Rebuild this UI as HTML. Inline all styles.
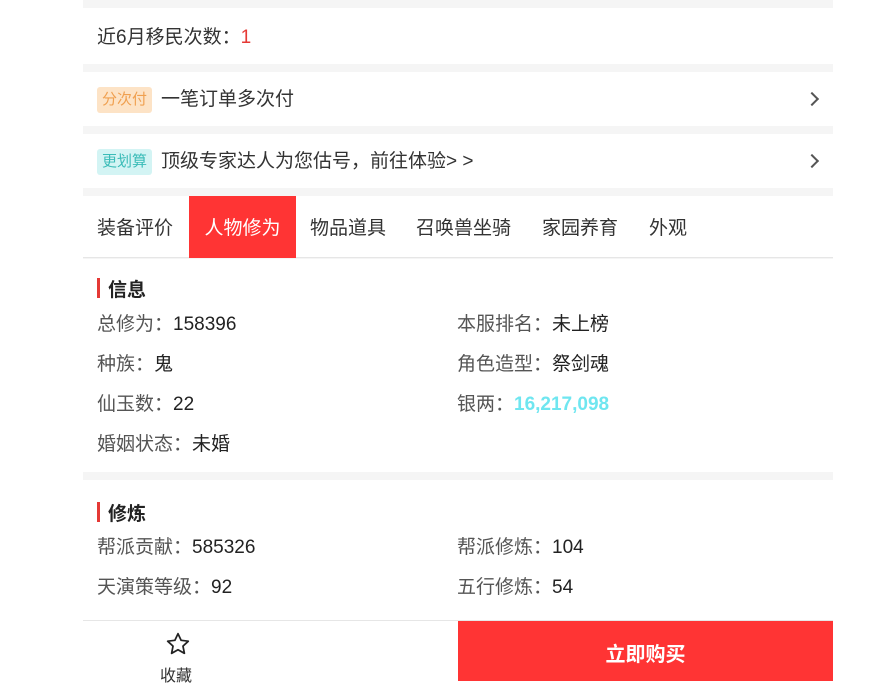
<!DOCTYPE html><html><head><meta charset="utf-8"><style>
*{margin:0;padding:0;box-sizing:border-box}
body{width:890px;height:680px;overflow:hidden;background:#fff;font-family:"Liberation Sans","Noto Sans CJK SC",sans-serif;color:#333;position:relative}
.wrap{position:absolute;left:83px;top:0;width:750px;height:680px;background:#f5f5f5}
.card{position:absolute;left:0;width:750px;background:#fff}
.t{position:absolute;font-size:19px;line-height:24px;white-space:nowrap}
.tag{display:inline-block;font-size:15px;line-height:26px;padding:0 5px;border-radius:3px;margin-right:9px;vertical-align:middle}
.arr{position:absolute;right:16px;width:10px;height:10px;border-right:2px solid #555;border-top:2px solid #555;transform:rotate(45deg)}
.tab{position:absolute;top:0;height:62px;line-height:66px;font-size:19px}
.h{position:absolute;left:14px;font-size:19px;font-weight:bold;color:#222;padding-left:11px}
.h:before{content:"";position:absolute;left:0;top:3px;width:3px;height:20px;background:#e53935}
.k{color:#555}.v{color:#222}
</style></head><body><div class="wrap">
<div class="card" style="top:8px;height:56px"><div class="t" style="left:14px;top:18px">近6月移民次数：<span style="color:#e53935">1</span></div></div>
<div class="card" style="top:72px;height:54px"><div class="t" style="left:14px;top:15px"><span class="tag" style="background:#fde3c6;color:#f0a050">分次付</span>一笔订单多次付</div><div class="arr" style="top:22px"></div></div>
<div class="card" style="top:134px;height:54px"><div class="t" style="left:14px;top:15px"><span class="tag" style="background:#d3f4f4;color:#3bbcb8">更划算</span>顶级专家达人为您估号，前往体验&gt; &gt;</div><div class="arr" style="top:22px"></div></div>
<div class="card" style="top:196px;height:62px;border-bottom:1px solid #e6e6e6">
<div class="tab" style="left:14px">装备评价</div>
<div class="tab" style="left:106px;width:107px;background:#ff3434;color:#fff;text-align:center">人物修为</div>
<div class="tab" style="left:227px">物品道具</div>
<div class="tab" style="left:333px">召唤兽坐骑</div>
<div class="tab" style="left:459px">家园养育</div>
<div class="tab" style="left:566px">外观</div>
</div>
<div class="card" style="top:259px;height:213px">
<div class="h" style="top:16px">信息</div>
<div class="t" style="left:14px;top:54px"><span class="k">总修为：</span><span class="v">158396</span></div>
<div class="t" style="left:374px;top:54px"><span class="k">本服排名：</span><span class="v">未上榜</span></div>
<div class="t" style="left:14px;top:94px"><span class="k">种族：</span><span class="v">鬼</span></div>
<div class="t" style="left:374px;top:94px"><span class="k">角色造型：</span><span class="v">祭剑魂</span></div>
<div class="t" style="left:14px;top:134px"><span class="k">仙玉数：</span><span class="v">22</span></div>
<div class="t" style="left:374px;top:134px"><span class="k">银两：</span><span style="color:#6fe6f0;font-weight:bold">16,217,098</span></div>
<div class="t" style="left:14px;top:174px"><span class="k">婚姻状态：</span><span class="v">未婚</span></div>
</div>
<div class="card" style="top:480px;height:200px">
<div class="h" style="top:19px">修炼</div>
<div class="t" style="left:14px;top:56px"><span class="k">帮派贡献：</span><span class="v">585326</span></div>
<div class="t" style="left:374px;top:56px"><span class="k">帮派修炼：</span><span class="v">104</span></div>
<div class="t" style="left:14px;top:96px"><span class="k">天演策等级：</span><span class="v">92</span></div>
<div class="t" style="left:374px;top:96px"><span class="k">五行修炼：</span><span class="v">54</span></div>
</div>
<div class="card" style="top:620px;height:60px;border-top:1px solid #e6e6e6">
<svg style="position:absolute;left:82px;top:10px" width="26" height="26" viewBox="0 0 24 24"><path d="M12 2.5l2.9 6.1 6.6.8-4.9 4.6 1.3 6.6L12 17.3l-5.9 3.3 1.3-6.6-4.9-4.6 6.6-.8z" fill="none" stroke="#222" stroke-width="1.6" stroke-linejoin="round"/></svg>
<div style="position:absolute;left:77px;top:41px;font-size:16px;color:#333">收藏</div>
<div style="position:absolute;left:375px;top:0;width:375px;height:60px;background:#ff3434;color:#fff;font-size:20px;font-weight:bold;text-align:center;line-height:68px">立即购买</div>
</div>
</div></body></html>
